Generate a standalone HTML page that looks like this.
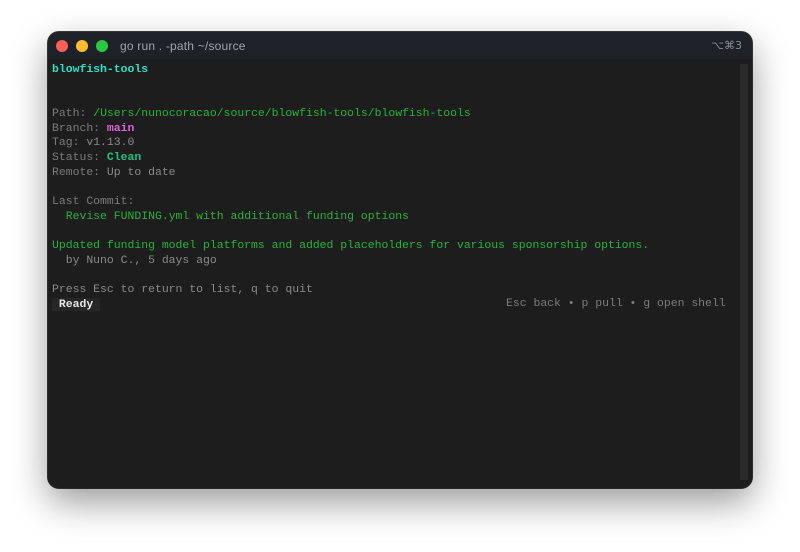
<!DOCTYPE html>
<html><head><style>
html,body{margin:0;padding:0;width:800px;height:552px;background:#fff;overflow:hidden}
.win{position:absolute;left:48px;top:32px;width:704px;height:456px;border-radius:11px;background:#1d1d1d;box-shadow:0 14px 36px rgba(0,0,0,.4),0 0 0 1px #3a3a3a;overflow:hidden}
.tb{position:absolute;left:0;top:0;right:0;height:27px;background:#1e2228;}
.dot{position:absolute;top:8px;width:12px;height:12px;border-radius:50%}
.title{position:absolute;left:72px;top:7px;font:12px "Liberation Sans",sans-serif;color:#a0a4aa;letter-spacing:0.2px}
.kb{position:absolute;right:10px;top:7px;font:11px "DejaVu Sans",sans-serif;color:#8a8e94}
.sb{position:absolute;right:4px;top:32px;width:8px;height:416px;background:#2a2a2a}
.term{position:absolute;left:4px;top:31px;font:11.45px/14.65px "Liberation Mono",monospace;color:#8a8a8a;white-space:pre}
.g{color:#27b33a}.c{color:#2be0c8;font-weight:bold}.m{color:#e060e0;font-weight:bold}.cl{color:#22c07a;font-weight:bold}.lb{color:#7c7c7c}
.rdy{background:#262626;color:#e8e8e8;font-weight:bold}
.right{position:absolute;left:458px;top:265px;font:11.45px/14.65px "Liberation Mono",monospace;color:#7c7c7c;white-space:pre}
</style></head><body>
<div class="win">
<div class="tb">
<div class="dot" style="left:8px;background:#fe5f57"></div>
<div class="dot" style="left:28px;background:#febc2e"></div>
<div class="dot" style="left:48px;background:#28c840"></div>
<div class="title">go run . -path ~/source</div>
<div class="kb">⌥⌘3</div>
</div>
<div class="sb"></div>
<div class="term"><span class="c">blowfish-tools</span>


<span class="lb">Path:</span> <span class="g">/Users/nunocoracao/source/blowfish-tools/blowfish-tools</span>
<span class="lb">Branch:</span> <span class="m">main</span>
<span class="lb">Tag:</span> v1.13.0
<span class="lb">Status:</span> <span class="cl">Clean</span>
<span class="lb">Remote:</span> Up to date

<span class="lb">Last Commit:</span>
  <span class="g">Revise FUNDING.yml with additional funding options</span>

<span class="g">Updated funding model platforms and added placeholders for various sponsorship options.</span>
  by Nuno C., 5 days ago

Press Esc to return to list, q to quit
<span class="rdy"> Ready </span></div>
<div class="right">Esc back • p pull • g open shell</div>
</div>
</body></html>
